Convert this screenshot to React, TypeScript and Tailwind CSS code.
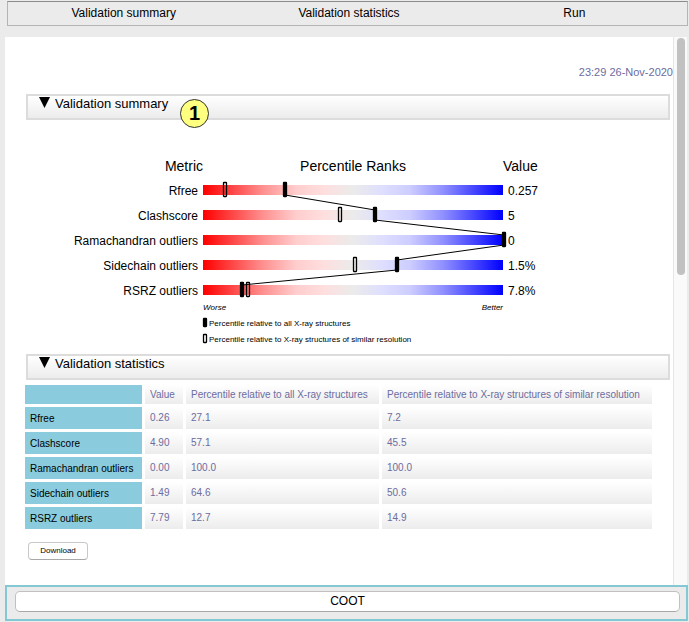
import { useState } from 'react';
import type { ReactNode } from 'react';

type Metric = {
  name: string;
  shown: string;
  value: string;
  all: string;
  similar: string;
  // Horizontal marker positions along the 300 unit bar.
  allAt: number;
  similarAt: number | null;
};

const metrics: Metric[] = [
  { name: 'Rfree', shown: '0.257', value: '0.26', all: '27.1', similar: '7.2', allAt: 82, similarAt: 22 },
  { name: 'Clashscore', shown: '5', value: '4.90', all: '57.1', similar: '45.5', allAt: 172, similarAt: 137 },
  { name: 'Ramachandran outliers', shown: '0', value: '0.00', all: '100.0', similar: '100.0', allAt: 301, similarAt: null },
  { name: 'Sidechain outliers', shown: '1.5%', value: '1.49', all: '64.6', similar: '50.6', allAt: 194, similarAt: 152 },
  { name: 'RSRZ outliers', shown: '7.8%', value: '7.79', all: '12.7', similar: '14.9', allAt: 39, similarAt: 45 },
];

const BAR_X = 137;
const BAR_Y = 27;
const ROW = 25;

function Marker({ x, y, filled, height = 15 }: { x: number; y: number; filled: boolean; height?: number }) {
  return (
    <rect
      x={x - 1.5}
      y={y + 0.5}
      width={3}
      height={height - 1}
      rx={0.5}
      fill={filled ? '#000' : 'none'}
      stroke="#000"
      strokeWidth={1.3}
    />
  );
}

function PercentileChart() {
  return (
    <svg
      width="480"
      height="190"
      viewBox="0 0 480 190"
      role="img"
      aria-label="Percentile ranks"
      className="ml-11 block shrink-0 font-['Liberation_Sans',Arial,sans-serif]"
    >
      <defs>
        <linearGradient id="rank">
          <stop offset="0" stopColor="#ff0000" />
          <stop offset="0.1" stopColor="#ff4848" />
          <stop offset="0.2" stopColor="#ff9090" />
          <stop offset="0.31" stopColor="#ffcdcd" />
          <stop offset="0.4" stopColor="#ffdede" />
          <stop offset="0.5" stopColor="#ebebeb" />
          <stop offset="0.6" stopColor="#dedeff" />
          <stop offset="0.69" stopColor="#cdcdff" />
          <stop offset="0.8" stopColor="#9090ff" />
          <stop offset="0.9" stopColor="#4848ff" />
          <stop offset="1" stopColor="#0000ff" />
        </linearGradient>
      </defs>

      <g fontSize="14">
        <text x="137" y="13" textAnchor="end">Metric</text>
        <text x="287" y="13" textAnchor="middle">Percentile Ranks</text>
        <text x="437" y="13">Value</text>
      </g>

      {metrics.map((m, i) => (
        <g key={m.name} fontSize="12">
          <text x={BAR_X - 5} y={BAR_Y + ROW * i + 10} textAnchor="end">{m.name}</text>
          <rect x={BAR_X} y={BAR_Y + ROW * i} width="300" height="10" fill="url(#rank)" />
          <text x={BAR_X + 305} y={BAR_Y + ROW * i + 10}>{m.shown}</text>
        </g>
      ))}

      {metrics.slice(1).map((m, i) => (
        <line
          key={m.name}
          x1={BAR_X + metrics[i].allAt}
          y1={BAR_Y + ROW * i + 10}
          x2={BAR_X + m.allAt}
          y2={BAR_Y + ROW * (i + 1)}
          stroke="#000"
        />
      ))}

      {metrics.map((m, i) => (
        <g key={m.name}>
          {m.similarAt !== null && <Marker x={BAR_X + m.similarAt} y={BAR_Y + ROW * i - 3} filled={false} />}
          <Marker x={BAR_X + m.allAt} y={BAR_Y + ROW * i - 3} filled />
        </g>
      ))}

      <g fontSize="8">
        <text x="137" y="152" fontStyle="italic">Worse</text>
        <text x="437" y="152" textAnchor="end" fontStyle="italic">Better</text>
        <Marker x={139} y={160} filled height={9} />
        <text x="143" y="168">Percentile relative to all X-ray structures</text>
        <Marker x={139} y={176} filled={false} height={9} />
        <text x="143" y="184">Percentile relative to X-ray structures of similar resolution</text>
      </g>
    </svg>
  );
}

function Section({ title, badge, children }: { title: string; badge?: string; children: ReactNode }) {
  const [open, setOpen] = useState(true);
  return (
    <section>
      <h2 className="relative">
        <button
          type="button"
          aria-expanded={open}
          onClick={() => setOpen(!open)}
          className="flex h-[26px] w-full items-start gap-[5px] border-2 border-[#dcdcdc] bg-linear-to-b from-white to-[#ececec] pl-[11px] text-left text-[13px] leading-4"
        >
          <svg width="11" height="12" viewBox="0 0 11 12" aria-hidden="true" className={open ? 'shrink-0' : 'shrink-0 -rotate-90'}>
            <path d="M0 1h11L5.5 12z" />
          </svg>
          {title}
        </button>
        {badge && (
          <span className="absolute top-[5px] left-[154px] flex size-[29px] items-center justify-center rounded-full border border-[#333333] bg-[#ffff80] pb-[2px] text-[20px] font-bold">
            {badge}
          </span>
        )}
      </h2>
      {open && children}
    </section>
  );
}

const cell = 'bg-linear-to-b from-white to-[#ececec] px-[5px] text-left align-middle font-normal whitespace-nowrap text-[#6c6ca0]';
const rowHead = 'bg-[#8accdd] px-[5px] pt-px text-left align-middle font-normal whitespace-nowrap text-black';

function StatisticsTable() {
  return (
    <table className="mt-[2px] -ml-[4px] w-[633px] table-fixed border-separate border-spacing-[3px] text-[10px] leading-4">
      <colgroup>
        <col className="w-[117px]" />
        <col className="w-[38px]" />
        <col className="w-[193px]" />
        <col />
      </colgroup>
      <thead>
        <tr className="h-[19px]">
          <td className={rowHead} />
          <th scope="col" className={cell}>Value</th>
          <th scope="col" className={cell}>Percentile relative to all X-ray structures</th>
          <th scope="col" className={cell}>Percentile relative to X-ray structures of similar resolution</th>
        </tr>
      </thead>
      <tbody>
        {metrics.map((m) => (
          <tr key={m.name} className="h-[22px]">
            <th scope="row" className={rowHead}>{m.name}</th>
            <td className={cell}>{m.value}</td>
            <td className={cell}>{m.all}</td>
            <td className={cell}>{m.similar}</td>
          </tr>
        ))}
      </tbody>
    </table>
  );
}

export default function App() {
  return (
    <div className="flex h-screen flex-col bg-[#ebebeb] pb-px font-['Liberation_Sans',Arial,sans-serif] text-black">
      <nav className="mt-px mr-px ml-[7px] grid h-[25px] shrink-0 grid-cols-3 border border-[#b4b4b4] border-t-[#8c8c8c] pl-[3px] text-[12px]">
        {['Validation summary', 'Validation statistics', 'Run'].map((label) => (
          <button key={label} type="button" className="pb-px">{label}</button>
        ))}
      </nav>

      <div className="mt-[11px] mr-[2px] ml-[5px] flex min-h-0 flex-1 bg-white">
        <main className="min-w-0 flex-1 overflow-hidden pl-[21px]">
          <p className="mt-[27px] text-right text-[11px] leading-4 text-[#6c6ca0]">23:29 26-Nov-2020</p>
          <div className="mt-[14px] mr-[3px]">
            <Section title="Validation summary" badge="1">
              <div className="-ml-[4px] pt-[38px] pb-[6px]">
                <PercentileChart />
              </div>
            </Section>
            <Section title="Validation statistics">
              <StatisticsTable />
              <button
                type="button"
                className="mt-[10px] ml-[2px] h-[18px] w-[60px] rounded-[4px] border border-[#c8c8c8] border-b-[#a8a8a8] bg-white pb-px text-[8px]"
              >
                Download
              </button>
            </Section>
          </div>
        </main>
        <div className="w-[14px] shrink-0 border-l border-[#e6e6e6] bg-[#fafafa] pt-px pl-[3px]" aria-hidden="true">
          <div className="h-[237px] w-[8px] rounded-full bg-[#c1c1c1]" />
        </div>
      </div>

      <footer className="mr-px ml-[5px] flex h-[36px] shrink-0 border-2 border-[#84c8d3] pt-1 pr-1.5 pl-2">
        <button
          type="button"
          className="h-[21px] flex-1 rounded-[5px] border border-[#c0c0c0] border-b-[#a8a8a8] bg-white pb-[2px] text-[12px] leading-4"
        >
          COOT
        </button>
      </footer>
    </div>
  );
}
